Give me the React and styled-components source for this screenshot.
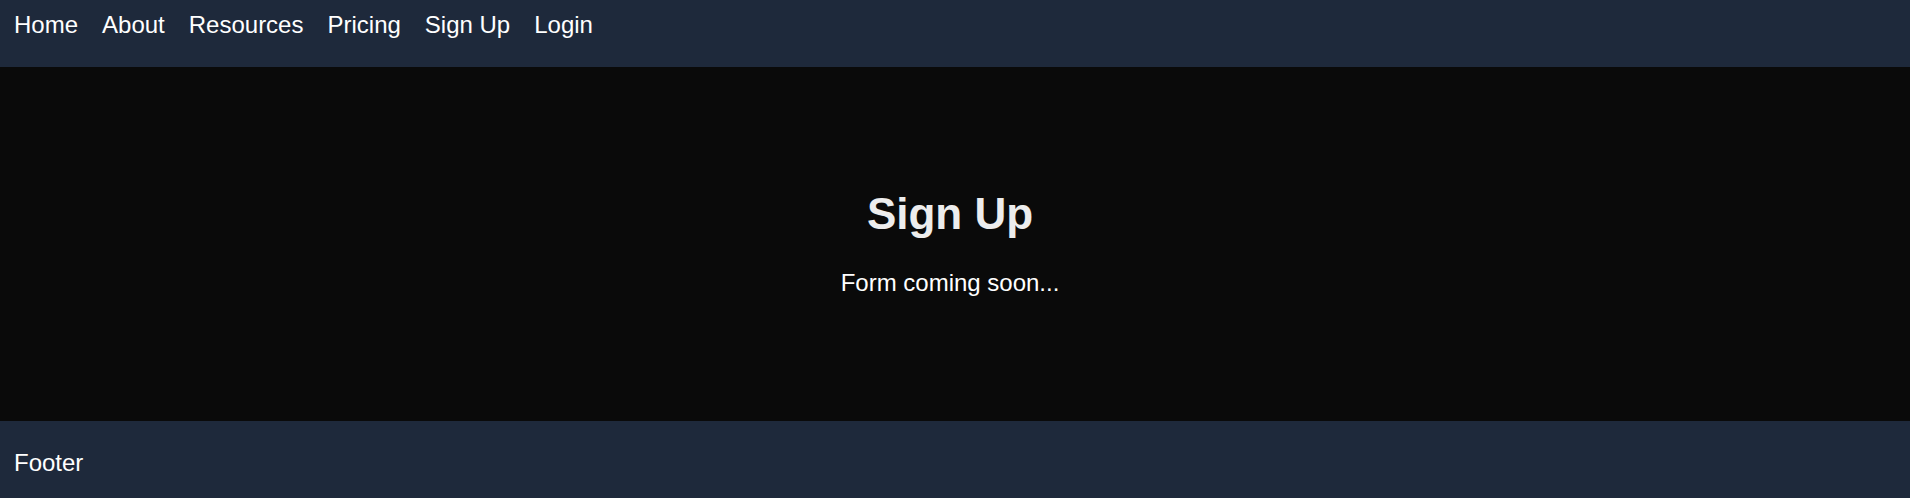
import React from 'react';
import styled, { createGlobalStyle } from 'styled-components';

const GlobalStyle = createGlobalStyle`
  html, body {
    margin: 0;
    padding: 0;
    background: #0a0a0a;
    font-family: "Liberation Sans", Arial, sans-serif;
  }
  * {
    box-sizing: border-box;
  }
`;

const Page = styled.div`
  display: flex;
  flex-direction: column;
  min-height: 100vh;
`;

const Nav = styled.nav`
  display: flex;
  align-items: flex-start;
  gap: 24px;
  height: 67px;
  padding: 11px 14px 0;
  background: #1e293b;
`;

const NavLink = styled.a`
  color: #ffffff;
  font-size: 24px;
  text-decoration: none;
  cursor: pointer;
`;

const Main = styled.main`
  display: flex;
  flex-direction: column;
  align-items: center;
  justify-content: center;
  height: 354px;
  padding-right: 10px;
  padding-bottom: 2px;
  background: #0a0a0a;
  color: #ededed;
`;

const Title = styled.h1`
  margin: 0;
  font-size: 44px;
  font-weight: 700;
`;

const Note = styled.p`
  margin: 30px 0 0;
  font-size: 24px;
  color: #ffffff;
`;

const Footer = styled.footer`
  padding: 28px 14px 24px;
  background: #1e293b;
  color: #ffffff;
  font-size: 24px;
`;

const links = ['Home', 'About', 'Resources', 'Pricing', 'Sign Up', 'Login'];

export default function App() {
  return (
    <>
      <GlobalStyle />
      <Page>
        <Nav>
          {links.map((label) => (
            <NavLink key={label}>{label}</NavLink>
          ))}
        </Nav>
        <Main>
          <Title>Sign Up</Title>
          <Note>Form coming soon...</Note>
        </Main>
        <Footer>Footer</Footer>
      </Page>
    </>
  );
}
